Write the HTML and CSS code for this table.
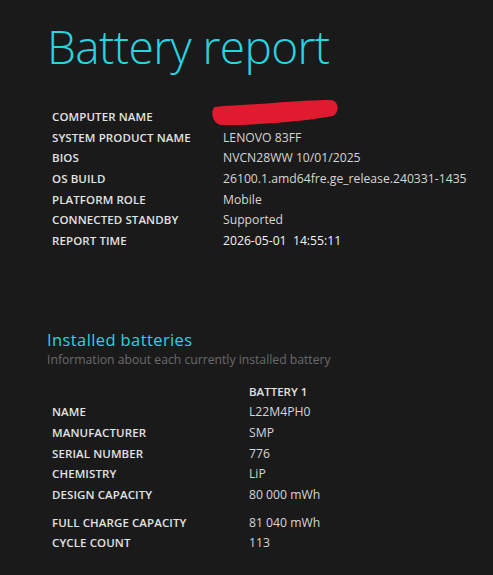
FILE: index.html
```html
<!DOCTYPE html>
<html>
<head>
    <title>Battery report</title>
    <link rel="stylesheet" href="styles.css">
</head>
<body>
    <h1 class="report-title">Battery report</h1>

    <!-- System info -->
    <table class="info-table system-table">
        <tr><td class="label">COMPUTER NAME</td><td class="value">
            <svg class="redact" width="130" height="26" viewBox="0 0 130 26">
                <path d="M4 7 C20 5 40 5 62 3 C85 1 105 0 120 0 C128 1 129 12 122 16 C105 19 90 21 75 22 C55 24 30 25 10 25 C1 24 -1 10 4 7 Z" fill="#e01a2f"/>
            </svg>
        </td></tr>
        <tr><td class="label">SYSTEM PRODUCT NAME</td><td class="value">LENOVO 83FF</td></tr>
        <tr><td class="label">BIOS</td><td class="value">NVCN28WW 10/01/2025</td></tr>
        <tr><td class="label">OS BUILD</td><td class="value">26100.1.amd64fre.ge_release.240331-1435</td></tr>
        <tr><td class="label">PLATFORM ROLE</td><td class="value">Mobile</td></tr>
        <tr><td class="label">CONNECTED STANDBY</td><td class="value">Supported</td></tr>
        <tr><td class="label">REPORT TIME</td><td class="value strong">2026-05-01&nbsp;&nbsp;14:55:11</td></tr>
    </table>

    <!-- Batteries -->
    <h2 class="section-title">Installed batteries</h2>
    <p class="section-desc">Information about each currently installed battery</p>

    <table class="info-table battery-table">
        <thead>
            <tr><th></th><th class="col-head">BATTERY 1</th></tr>
        </thead>
        <tbody>
            <tr><td class="label">NAME</td><td class="value">L22M4PH0</td></tr>
            <tr><td class="label">MANUFACTURER</td><td class="value">SMP</td></tr>
            <tr><td class="label">SERIAL NUMBER</td><td class="value">776</td></tr>
            <tr><td class="label">CHEMISTRY</td><td class="value">LiP</td></tr>
            <tr class="spaced"><td class="label">DESIGN CAPACITY</td><td class="value">80 000 mWh</td></tr>
            <tr><td class="label">FULL CHARGE CAPACITY</td><td class="value">81 040 mWh</td></tr>
            <tr><td class="label">CYCLE COUNT</td><td class="value">113</td></tr>
        </tbody>
    </table>
</body>
</html>
```

FILE: styles.css
```css
/* --- Base --- */
body {
    margin: 0;
    padding: 0 0 0 47px;
    background-color: #1a1a1a;
    color: #dcdcdc;
    font-family: "Open Sans", "Noto Sans", sans-serif;
}

.report-title {
    margin: 15px 0 0 0;
    font-size: 46px;
    font-weight: 300;
    line-height: 62px;
    color: #2ad3e0;
    letter-spacing: -0.6px;
}

/* --- Tables --- */
.info-table { border-collapse: collapse; margin-left: 5px; }
.info-table td, .info-table th { padding: 0; height: 20.7px; vertical-align: middle; text-align: left; white-space: nowrap; }
.label { font-size: 11.5px; font-weight: 600; color: #e2e2e2; letter-spacing: 0.1px; }
.value { font-size: 12.2px; color: #d6d6d6; }
.value.strong { color: #f4f4f4; font-weight: 500; }

.system-table { margin-top: 29px; }
.system-table .label { width: 171px; }
.redact { display: block; margin: -6px 0 0 -12px; }

/* --- Battery section --- */
.section-title {
    margin: 78px 0 0 0;
    font-size: 16.5px;
    font-weight: 400;
    color: #2ad3e0;
    letter-spacing: 0.4px;
    line-height: 22px;
}
.section-desc {
    margin: 0;
    font-size: 12.2px;
    color: #6b6b6b;
    line-height: 18px;
}

.battery-table { margin-top: 12px; }
.battery-table .label { width: 197px; }
.col-head { font-size: 11.5px; font-weight: 600; color: #e2e2e2; }
.battery-table tr.spaced td { padding-bottom: 7px; }
```
